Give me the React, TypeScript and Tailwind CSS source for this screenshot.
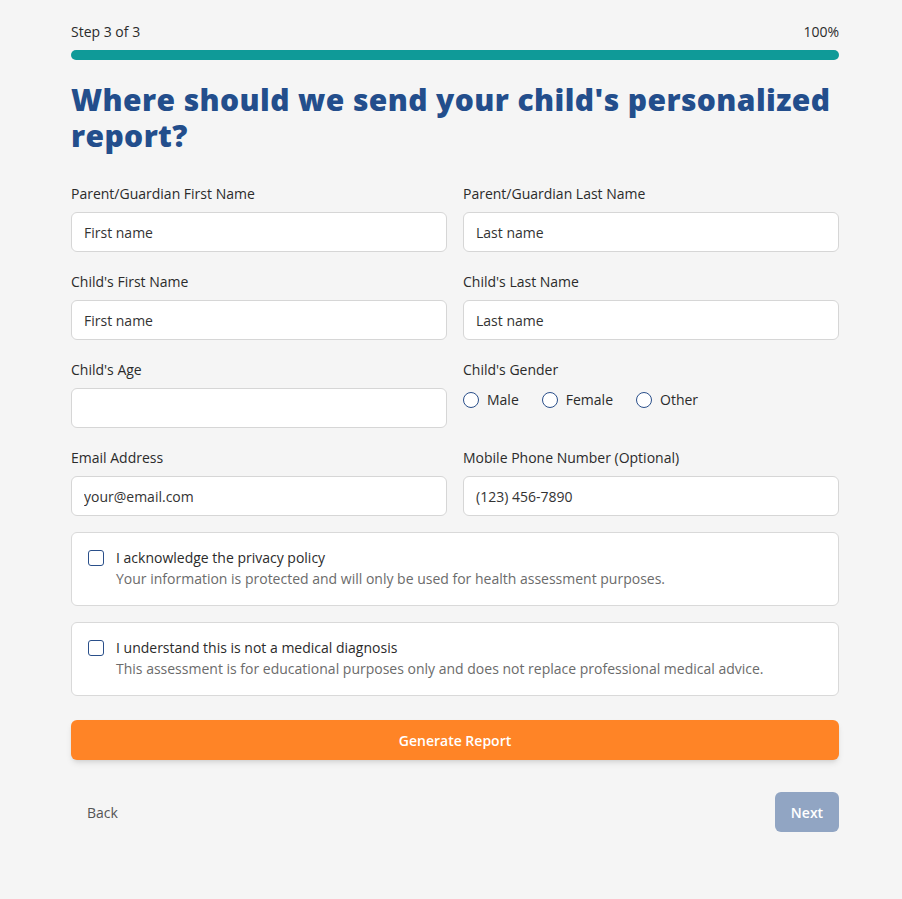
import { useState } from "react";

const font = { fontFamily: '"Open Sans", "Noto Sans", "Liberation Sans", sans-serif' };

const Field = ({ label, placeholder }: { label: string; placeholder?: string }) => (
  <div className="flex flex-col">
    <label className="text-[14px] leading-5 text-[#2b2b2b] mb-2">{label}</label>
    <input
      placeholder={placeholder}
      className="h-10 rounded-md border border-[#d6d6d6] bg-white px-3 text-[14px] text-[#2b2b2b] placeholder:text-[#333333] outline-none"
    />
  </div>
);

const Consent = ({ title, text }: { title: string; text: string }) => (
  <label className="flex items-start gap-3 rounded-md border border-[#d9d9d9] bg-white px-4 pt-[15px] pb-[16px]">
    <input
      type="checkbox"
      className="mt-[2px] h-4 w-4 appearance-none rounded-[3px] border border-[#2a4f8a] bg-white shrink-0"
    />
    <div className="flex flex-col">
      <span className="text-[14px] leading-5 text-[#2b2b2b]">{title}</span>
      <span className="text-[14px] leading-5 text-[#6b6b6b] mt-[1px]">{text}</span>
    </div>
  </label>
);

export default function App() {
  const [gender, setGender] = useState("");

  return (
    <div className="min-h-[899px] bg-[#f5f5f5]" style={font}>
      <div className="ml-[71px] w-[768px] pt-[22px]">
        <div className="flex justify-between text-[14px] leading-5 text-[#2b2b2b]">
          <span>Step 3 of 3</span>
          <span>100%</span>
        </div>
        <div className="mt-[8px] h-[10px] w-full rounded-full bg-[#0f9a98]" />

        <h1 className="mt-[22px] text-[30px] leading-[36px] font-extrabold tracking-[0.4px] text-[#234e8c]">
          Where should we send your child's personalized report?
        </h1>

        <div className="mt-[30px] grid grid-cols-2 gap-x-4 gap-y-5">
          <Field label="Parent/Guardian First Name" placeholder="First name" />
          <Field label="Parent/Guardian Last Name" placeholder="Last name" />
          <Field label="Child's First Name" placeholder="First name" />
          <Field label="Child's Last Name" placeholder="Last name" />
          <Field label="Child's Age" />
          <div className="flex flex-col">
            <span className="text-[14px] leading-5 text-[#2b2b2b] mb-2">Child's Gender</span>
            <div className="flex items-center gap-[23px] mt-[1px]">
              {["Male", "Female", "Other"].map((g) => (
                <label key={g} className="flex items-center gap-2 text-[14px] text-[#2b2b2b]">
                  <input
                    type="radio"
                    name="gender"
                    checked={gender === g}
                    onChange={() => setGender(g)}
                    className="h-4 w-4 appearance-none rounded-full border border-[#2a4f8a] bg-white"
                  />
                  {g}
                </label>
              ))}
            </div>
          </div>
          <Field label="Email Address" placeholder="your@email.com" />
          <Field label="Mobile Phone Number (Optional)" placeholder="(123) 456-7890" />
        </div>

        <div className="mt-4 flex flex-col gap-4">
          <Consent
            title="I acknowledge the privacy policy"
            text="Your information is protected and will only be used for health assessment purposes."
          />
          <Consent
            title="I understand this is not a medical diagnosis"
            text="This assessment is for educational purposes only and does not replace professional medical advice."
          />
        </div>

        <button className="mt-6 h-10 w-full rounded-md bg-[#ff8426] text-[14px] font-semibold text-white shadow-md">
          Generate Report
        </button>

        <div className="mt-8 flex items-center justify-between">
          <button className="px-4 h-10 text-[14px] text-[#555555]">Back</button>
          <button className="h-10 w-16 rounded-md bg-[#91a5c3] text-[14px] font-semibold text-white">
            Next
          </button>
        </div>
      </div>
    </div>
  );
}
